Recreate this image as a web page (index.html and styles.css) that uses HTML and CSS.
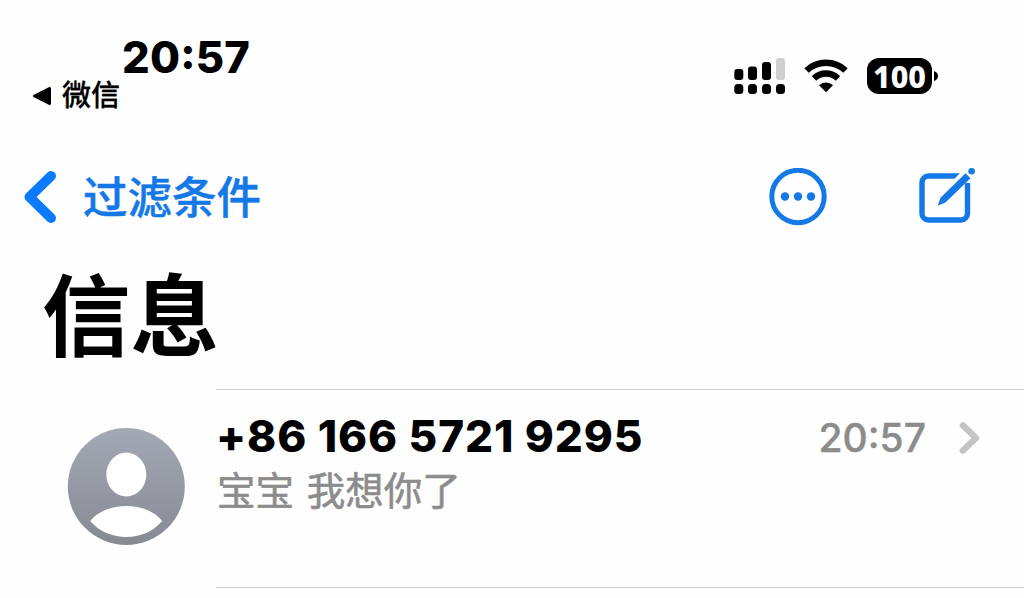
FILE: index.html
```html
<!DOCTYPE html>
<html lang="zh">
<head>
    <meta charset="UTF-8">
    <meta name="viewport" content="width=device-width, initial-scale=1.0">
    <title>信息</title>
    <link rel="stylesheet" href="styles.css">
</head>
<body>
    <header class="status-bar">
        <div class="status-left">
            <div class="clock">20:57</div>
            <div class="back-app">
                <svg width="20" height="20" viewBox="0 0 20 20"><path d="M17.500 2.500v15L2.500 10z" fill="#000" stroke="#000" stroke-width="3" stroke-linejoin="round"/></svg>
                <span>微信</span>
            </div>
        </div>
        <div class="status-right">
            <svg class="signal" width="52" height="36" viewBox="0 0 52 36">
                <rect x="0.3" y="11" width="9" height="11" rx="3"/>
                <rect x="14" y="8.5" width="9" height="13.5" rx="3"/>
                <rect x="28" y="4" width="9" height="18" rx="3"/>
                <rect x="42" y="0" width="9" height="22" rx="3" fill="#cfcfcf"/>
                <rect x="0.3" y="26" width="9" height="10" rx="3.5"/>
                <rect x="14" y="26" width="9" height="10" rx="3.5"/>
                <rect x="28" y="26" width="9" height="10" rx="3.5"/>
                <rect x="42" y="26" width="9" height="10" rx="3.5"/>
            </svg>
            <svg class="wifi" width="44" height="34" viewBox="0 0 44 34">
                <path d="M2.500 11.5a28.500 28.500 0 0 1 39 0M10 19.300a17.500 17.500 0 0 1 24 0" fill="none" stroke="#000" stroke-width="6.400"/>
                <path d="M15 26.300a10 10 0 0 1 14 0L22 33.200z"/>
            </svg>
            <div class="battery">100</div>
            <svg class="battery-tip" width="4" height="10" viewBox="0 0 4 10"><path d="M0 0q4 1.5 4 5t-4 5z"/></svg>
        </div>
    </header>

    <nav class="nav-bar">
        <svg class="back" width="32" height="52" viewBox="0 0 32 52"><path d="M27 5L5.500 26 27 47" fill="none" stroke="#0a7aff" stroke-width="10" stroke-linecap="round" stroke-linejoin="round"/></svg>
        <span class="nav-label">过滤条件</span>
        <svg class="more" width="58" height="58" viewBox="0 0 58 58">
            <circle cx="29" cy="28.500" r="26.2" fill="none" stroke="#1479e6" stroke-width="5"/>
            <circle cx="16" cy="28.500" r="4.2"/>
            <circle cx="29" cy="28.500" r="4.2"/>
            <circle cx="42" cy="28.500" r="4.2"/>
        </svg>
        <svg class="compose" width="58" height="58" viewBox="0 0 58 58">
            <path d="M42 8H9.500A6.500 6.500 0 0 0 3 14.500v31A6.500 6.500 0 0 0 9.500 52H42a6.500 6.500 0 0 0 6.500-6.500V15" fill="none" stroke="#1479e6" stroke-width="5.4"/>
            <path d="M25 29.500L54-0.500" stroke="#fefefe" stroke-width="11"/>
            <path d="M46.500 5.200l5 5L26.500 34.500 18.700 37.800 21.500 29.700z"/>
            <circle cx="52.600" cy="3.300" r="3.300"/>
        </svg>
    </nav>

    <h1>信息</h1>

    <main class="message">
        <svg class="avatar" width="118" height="118" viewBox="0 0 118 118">
            <defs>
                <linearGradient id="avatarFill" x1="0" y1="0" x2="0" y2="1">
                    <stop offset="0" stop-color="#a3a9b5"/>
                    <stop offset="1" stop-color="#868a93"/>
                </linearGradient>
            </defs>
            <circle cx="59.3" cy="58.500" r="58.5" fill="url(#avatarFill)"/>
            <ellipse cx="59.300" cy="46.500" rx="20" ry="22" fill="#fff"/>
            <path d="M23.200 93C31.700 82.500 45.700 78 59.400 78S86.700 82.500 95.200 93C85.700 104 72.700 109 59.400 109S32.700 104 23.200 93z" fill="#fff"/>
        </svg>
        <div class="message-body">
            <div class="message-top">
                <span class="sender">+86 166 5721 9295</span>
                <span class="time">20:57</span>
                <svg class="chevron" width="22" height="34" viewBox="0 0 22 34"><path d="M4 4.500L17 17 4 29.500" fill="none" stroke="#c4c4c4" stroke-width="6.500" stroke-linecap="round" stroke-linejoin="round"/></svg>
            </div>
            <div class="preview">宝宝 我想你了</div>
        </div>
    </main>
</body>
</html>
```
FILE: styles.css
```css
* {
    box-sizing: border-box;
}
body {
    margin: 0;
    height: 598px;
    overflow: hidden;
    background: #fefefe;
    color: #000;
    font-family: Inter, "Noto Sans CJK SC", sans-serif;
}
svg {
    display: block;
    flex: none;
}
.status-bar {
    display: flex;
    justify-content: space-between;
    height: 140px;
    padding: 34px 86px 0 32px;
}
.clock {
    margin-left: 90px;
    font-size: 43.5px;
    line-height: 46px;
    font-weight: 800;
    letter-spacing: 0.2px;
    font-feature-settings: "case";
}
.back-app {
    display: flex;
    align-items: center;
    gap: 10px;
    height: 32px;
    font-size: 29px;
    line-height: 32px;
    font-weight: 500;
    -webkit-text-stroke: 0.3px #000;
}
.status-right {
    display: flex;
    align-items: center;
    height: 36px;
    margin-top: 24px;
}
.wifi {
    margin-left: 18px;
}
.battery {
    width: 65px;
    height: 36px;
    margin-left: 19px;
    border-radius: 12px;
    background: #000;
    color: #fff;
    font: 800 30.5px/36px "Noto Sans", sans-serif;
    text-align: center;
}
.battery-tip {
    margin-left: 2px;
}
.nav-bar {
    display: flex;
    align-items: center;
    height: 114px;
    padding: 0 47px 0 24px;
    color: #1479e6;
    fill: #1479e6;
}
.nav-label {
    margin: -5px 0 0 27px;
    font-size: 44.5px;
    font-weight: 500;
    -webkit-text-stroke: 0.5px #1479e6;
}
.more {
    margin-left: auto;
}
.compose {
    margin-left: 92px;
}
h1 {
    margin: 0;
    height: 135px;
    padding-left: 42px;
    font-size: 88.5px;
    line-height: 125px;
    font-weight: 700;
}
.message {
    display: flex;
    height: 199px;
    padding-left: 67px;
}
.avatar {
    margin-top: 39px;
}
.message-body {
    flex: 1;
    margin-left: 31px;
    padding: 21px 43px 0 0;
    border-top: 1px solid #cfcfcf;
    border-bottom: 1px solid #cfcfcf;
}
.message-top {
    display: flex;
    align-items: center;
    height: 50px;
}
.sender {
    font-size: 44px;
    font-weight: 800;
    letter-spacing: 0.9px;
    white-space: nowrap;
}
.time {
    margin: 2px 33px 0 auto;
    color: #8c8c8c;
    font-size: 39px;
    font-weight: 500;
    font-feature-settings: "case";
    -webkit-text-stroke: 0.4px #8c8c8c;
}
.chevron {
    margin-top: 3px;
}
.preview {
    padding-left: 1px;
    color: #8c8c8c;
    font-size: 38.5px;
    line-height: 60px;
    word-spacing: 2px;
    -webkit-text-stroke: 0.6px #8c8c8c;
}
```
